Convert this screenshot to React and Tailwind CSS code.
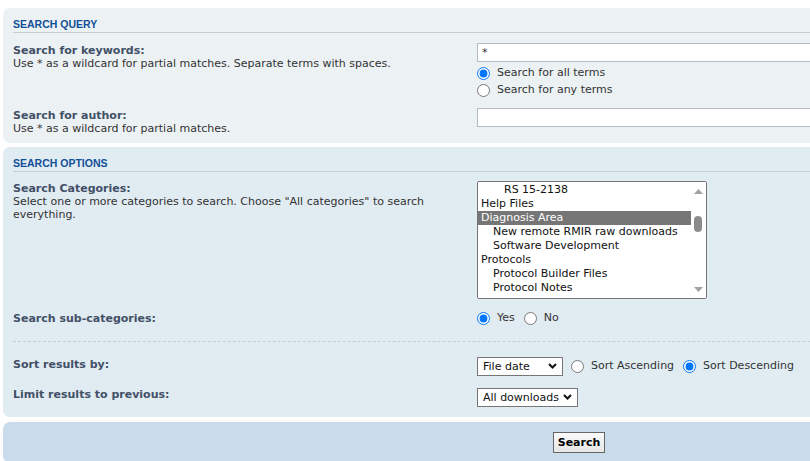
import React from 'react';

const Chevron = ({ className }) => (
	<svg className={className} width="9" height="6" viewBox="0 0 9 6">
		<polyline points="1,1 4.5,4.5 8,1" fill="none" stroke="#111" strokeWidth="2" />
	</svg>
);

const Select = ({ label, width }) => (
	<div className={`relative h-[19px] ${width}`}>
		<select className="appearance-none w-full h-full border border-[#767676] bg-white pl-[5px] text-[11px] leading-[17px] text-[#111] rounded-none outline-none">
			<option>{label}</option>
		</select>
		<Chevron className="absolute right-[6px] top-[6px] pointer-events-none" />
	</div>
);

const Radio = ({ name, checked, children, className = '' }) => (
	<label className={`flex items-center h-[17px] ${className}`}>
		<input
			type="radio"
			name={name}
			defaultChecked={checked}
			className="m-0 w-[13px] h-[13px] accent-[#0075ff]"
		/>
		<span className="ml-[7px] text-[#333]">{children}</span>
	</label>
);

const Heading = ({ children }) => (
	<h3 className="font-['Liberation_Sans',Arial,sans-serif] font-bold text-[10.5px] leading-[14px] text-[#115098] uppercase border-b border-[#CCCCCC] pb-px">
		{children}
	</h3>
);

const Label = ({ children }) => (
	<div className="font-bold text-[#425067] leading-[13px]">{children}</div>
);

const categories = [
	{ name: 'RS 15-2138', level: 2 },
	{ name: 'Help Files', level: 0 },
	{ name: 'Diagnosis Area', level: 0, selected: true },
	{ name: 'New remote RMIR raw downloads', level: 1 },
	{ name: 'Software Development', level: 1 },
	{ name: 'Protocols', level: 0 },
	{ name: 'Protocol Builder Files', level: 1 },
	{ name: 'Protocol Notes', level: 1 },
];

const indent = ['pl-[3px]', 'pl-[15px]', 'pl-[26px]'];

const CategoryList = () => (
	<div className="flex w-[230px] h-[118px] border border-[#767676] rounded-[2px] bg-white overflow-hidden">
		<div className="flex-1 overflow-hidden pt-px">
			{categories.map((c, i) => (
				<div
					key={i}
					className={`h-[14px] leading-[14px] whitespace-nowrap text-[11px] ${indent[c.level]} ${
						c.selected ? 'bg-[#767676] text-white' : 'text-[#111]'
					}`}
				>
					{c.name}
				</div>
			))}
		</div>
		<div className="w-[15px] flex flex-col items-center bg-white">
			<svg width="9" height="5" viewBox="0 0 9 5" className="mt-[7px]">
				<polygon points="0,5 4.5,0 9,5" fill="#a3a3a3" />
			</svg>
			<div className="w-[8px] h-[16px] rounded-full bg-[#8c8c8c] mt-[22px] -ml-px" />
			<div className="flex-1" />
			<svg width="9" height="5" viewBox="0 0 9 5" className="mb-[6px]">
				<polygon points="0,0 9,0 4.5,5" fill="#a3a3a3" />
			</svg>
		</div>
	</div>
);

const App = () => {
	return (
		<div className="w-[810px] h-[461px] overflow-hidden bg-white font-['DejaVu_Sans',Verdana,sans-serif] text-[11px] text-[#333]">
			<div className="w-[1155px] pl-[3px] pt-[8px]">
				{/* search query */}
				<div className="rounded-[7px] bg-[#ECF1F3] px-[10px] pt-[9px] pb-[8px]">
					<Heading>Search query</Heading>
					<div className="flex mt-[10px]">
						<div className="w-[464px] shrink-0 pt-px">
							<Label>Search for keywords:</Label>
							<div className="leading-[13px]">Use * as a wildcard for partial matches. Separate terms with spaces.</div>
						</div>
						<div className="flex-1">
							<input
								type="text"
								defaultValue="*"
								className="block w-full h-[19px] border border-[#B4BAC0] bg-white px-[4px] text-[11px] text-[#333] outline-none"
							/>
							<div className="mt-[3px]">
								<Radio name="terms" checked>Search for all terms</Radio>
								<Radio name="terms">Search for any terms</Radio>
							</div>
						</div>
					</div>
					<div className="flex mt-[9px]">
						<div className="w-[464px] shrink-0 pt-px">
							<Label>Search for author:</Label>
							<div className="leading-[13px]">Use * as a wildcard for partial matches.</div>
						</div>
						<div className="flex-1">
							<input
								type="text"
								className="block w-full h-[19px] border border-[#B4BAC0] bg-white px-[4px] text-[11px] outline-none"
							/>
						</div>
					</div>
				</div>

				{/* search options */}
				<div className="mt-[4px] rounded-[7px] bg-[#E1EBF2] px-[10px] pt-[9px] pb-[10px]">
					<Heading>Search options</Heading>
					<div className="flex mt-[9px]">
						<div className="w-[464px] shrink-0 pt-px">
							<Label>Search Categories:</Label>
							<div className="leading-[13px] whitespace-nowrap">
								Select one or more categories to search. Choose "All categories" to search
								<br />
								everything.
							</div>
						</div>
						<CategoryList />
					</div>
					<div className="flex mt-[11px] h-[17px] items-center">
						<div className="w-[464px] shrink-0">
							<Label>Search sub-categories:</Label>
						</div>
						<div className="flex">
							<Radio name="sub" checked>Yes</Radio>
							<Radio name="sub" className="ml-[9px]">No</Radio>
						</div>
					</div>
					<div className="mt-[14px] border-t border-dashed border-[#CCCCCC]" />
					<div className="flex mt-[15px]">
						<div className="w-[464px] shrink-0 pt-px">
							<Label>Sort results by:</Label>
						</div>
						<div className="flex items-center">
							<Select label="File date" width="w-[86px]" />
							<Radio name="sort" className="ml-[8px]">Sort Ascending</Radio>
							<Radio name="sort" checked className="ml-[9px]">Sort Descending</Radio>
						</div>
					</div>
					<div className="flex mt-[12px]">
						<div className="w-[464px] shrink-0">
							<Label>Limit results to previous:</Label>
						</div>
						<Select label="All downloads" width="w-[101px]" />
					</div>
				</div>

				{/* submit */}
				<div className="mt-[5px] rounded-[7px] bg-[#CADCEB] pt-[10px] pb-[10px] flex justify-center">
					<button className="h-[21px] px-[4px] border border-[#666666] bg-gradient-to-b from-[#FAFAFA] to-[#E6E6E6] font-bold text-[11px] leading-[19px] text-black">
						Search
					</button>
				</div>
			</div>
		</div>
	);
};

export default App;
